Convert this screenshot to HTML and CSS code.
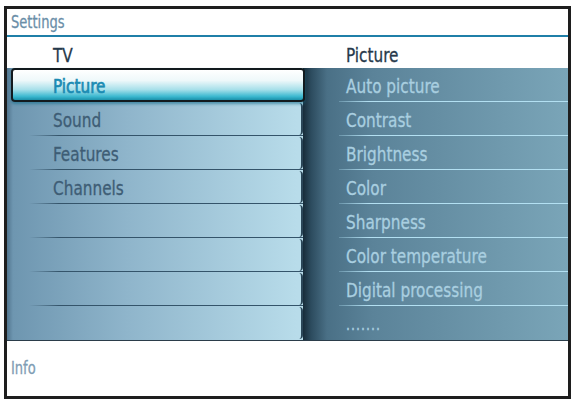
FILE: index.html
```html
<!DOCTYPE html>
<html>
<head>
<meta charset="utf-8">
<link rel="stylesheet" href="styles.css">
</head>
<body>
<div class="frame">
  <div class="title"><span class="t">Settings</span></div>
  <div class="head">
    <div class="head-left"><span class="t">TV</span></div>
    <div class="head-right"><span class="t">Picture</span></div>
  </div>
  <div class="menu">
    <div class="left">
      <div class="item selected"><span class="t">Picture</span></div>
      <div class="item"><span class="t">Sound</span></div>
      <div class="item"><span class="t">Features</span></div>
      <div class="item"><span class="t">Channels</span></div>
      <div class="item"></div>
      <div class="item"></div>
      <div class="item"></div>
      <div class="item last"></div>
    </div>
    <div class="right">
      <div class="sub"><span class="t">Auto picture</span></div>
      <div class="sub"><span class="t">Contrast</span></div>
      <div class="sub"><span class="t">Brightness</span></div>
      <div class="sub"><span class="t">Color</span></div>
      <div class="sub"><span class="t">Sharpness</span></div>
      <div class="sub"><span class="t">Color temperature</span></div>
      <div class="sub"><span class="t">Digital processing</span></div>
      <div class="sub last dots"><span class="t">.......</span></div>
    </div>
  </div>
  <div class="info"><span class="t">Info</span></div>
</div>
</body>
</html>
```
FILE: styles.css
```css
html, body {
  margin: 0;
  padding: 0;
  background: #ffffff;
}
body {
  font-family: "DejaVu Sans Condensed", "DejaVu Sans", sans-serif;
}
.t {
  display: inline-block;
  transform: scaleY(1.16);
  -webkit-text-stroke: 0.25px currentColor;
}
.frame {
  margin: 6px 2px 0 4px;
  width: 561px;
  height: 387px;
  border: 3px solid #1e1e1e;
  display: flex;
  flex-direction: column;
  background: #ffffff;
  overflow: hidden;
}
.title {
  height: 26px;
  line-height: 26px;
  padding-left: 4px;
  font-size: 14.5px;
  color: #6a8ea8;
  border-bottom: 2px solid #1f7fa8;
}
.head {
  display: grid;
  grid-template-columns: 296px 1fr;
  height: 31px;
  line-height: 37px;
  font-size: 17px;
  color: #26394b;
}
.head-left {
  padding-left: 46px;
}
.head-right {
  padding-left: 43px;
}
.menu {
  display: grid;
  grid-template-columns: 296px 1fr;
  height: 272px;
  border-bottom: 1px solid #2b3d4a;
}
.left {
  display: flex;
  flex-direction: column;
  background: linear-gradient(to right, #52768f 0px, #6e96b0 6px, #8fb5cb 120px, #b8dcea 290px);
}
.item {
  position: relative;
  height: 34px;
  line-height: 36px;
  padding-left: 46px;
  font-size: 17px;
  color: #3e5d75;
  box-sizing: border-box;
}
.item::after {
  content: "";
  position: absolute;
  left: 22px;
  right: 0;
  bottom: 0;
  height: 1px;
  background: linear-gradient(to right, rgba(50, 78, 98, 0), #34546a 30px, #34546a);
}
.item::before {
  content: "";
  position: absolute;
  right: 0;
  top: 1px;
  bottom: 1px;
  width: 4px;
  border-right: 2px solid #2a4658;
  border-radius: 0 4px 4px 0;
}
.item.last::after {
  display: none;
}
.item.selected {
  margin-left: 4px;
  margin-right: -2px;
  z-index: 2;
  padding-left: 40px;
  border: 2px solid #121a1e;
  border-radius: 4px;
  line-height: 33px;
  color: #1a8bb3;
  background: linear-gradient(to bottom, #ffffff 0%, #eef8fa 35%, #a8e0ea 65%, #3cb9d0 88%, #1a90aa 100%);
  box-shadow: 0 2px 3px rgba(20, 110, 140, 0.6);
}
.item.selected .t {
  -webkit-text-stroke: 0.6px currentColor;
}
.item.selected::after,
.item.selected::before {
  display: none;
}
.right {
  display: flex;
  flex-direction: column;
  background: linear-gradient(to right, #172c3a 0px, #2c4b5e 8px, #4a7086 24px, #5b8399 70px, #7aa5b8 265px);
}
.sub {
  position: relative;
  height: 34px;
  line-height: 37px;
  padding-left: 43px;
  font-size: 17px;
  color: #a9cfe0;
  box-sizing: border-box;
}
.sub::after {
  content: "";
  position: absolute;
  left: 36px;
  right: 0;
  bottom: 0;
  height: 1px;
  background: linear-gradient(to right, rgba(170, 220, 240, 0.3), #b3e0f2 30px, #b3e0f2);
}
.sub.last::after {
  display: none;
}
.dots {
  font-size: 14px;
  letter-spacing: 1px;
}
.info {
  flex: 1;
  display: flex;
  align-items: center;
  padding-left: 4px;
  padding-bottom: 2px;
  font-size: 14.5px;
  color: #7f9db4;
}
```
